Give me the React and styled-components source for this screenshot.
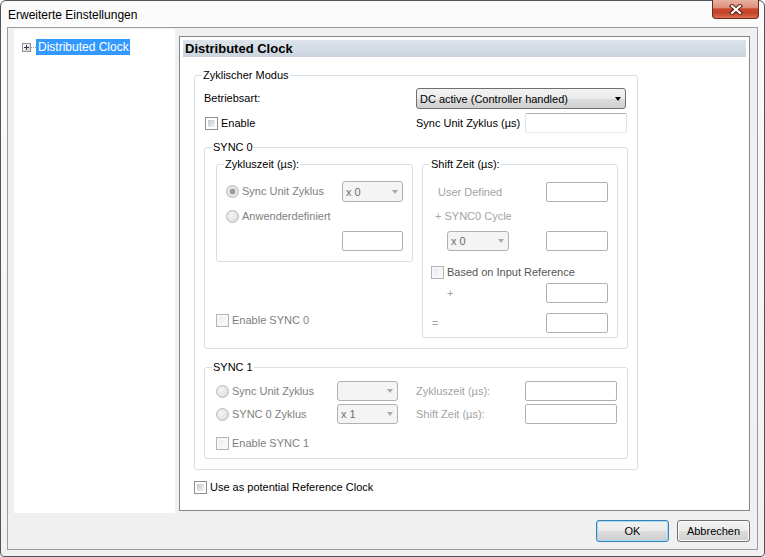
import React from "react";
import styled, { createGlobalStyle, css } from "styled-components";

const GlobalStyle = createGlobalStyle`
  html, body {
    margin: 0;
    padding: 0;
    width: 765px;
    height: 557px;
    overflow: hidden;
    background: #ffffff;
  }
  body {
    font-family: "Liberation Sans", Arial, sans-serif;
    font-size: 11px;
    color: #000;
  }
`;

const tone = {
  normal: "#000000",
  dim: "#808080",
  muted: "#a3a3a3",
  dark: "#555555",
};

const Window = styled.div`
  box-sizing: border-box;
  width: 765px;
  height: 557px;
  display: flex;
  flex-direction: column;
  padding: 0 6px 6px 6px;
  border: 1px solid #50555b;
  border-radius: 6px 6px 4px 4px;
  background: linear-gradient(#fbfbfb, #f1f1f1);
`;

const TitleBar = styled.div`
  height: 26px;
  display: flex;
  align-items: flex-start;
  flex: none;
`;

const Title = styled.span`
  margin: 7px 0 0 1px;
  font-size: 12px;
  line-height: 14px;
`;

const CloseButton = styled.div`
  box-sizing: border-box;
  width: 47px;
  height: 19px;
  margin: -1px -1px 0 auto;
  display: flex;
  align-items: center;
  justify-content: center;
  border: 1px solid #6e2b1e;
  border-top: none;
  border-radius: 0 0 4px 4px;
  background: linear-gradient(
    #eab0a2 0%,
    #de8f7c 42%,
    #c8472d 50%,
    #c3432a 72%,
    #d96f52 100%
  );
`;

const Client = styled.div`
  flex: 1;
  display: flex;
  flex-direction: column;
  border: 1px solid #9b9b9b;
  background: #f0f0f0;
  min-height: 0;
`;

const MainRow = styled.div`
  flex: 1;
  display: flex;
  gap: 4px;
  padding: 1px 7px 0 6px;
  min-height: 0;
`;

const TreePane = styled.div`
  width: 161px;
  flex: none;
  background: #ffffff;
  padding: 10px 0 0 8px;
  box-sizing: border-box;
`;

const TreeItem = styled.div`
  display: flex;
  align-items: center;
  height: 16px;
`;

const TreeLabel = styled.span`
  background: #3399ff;
  color: #ffffff;
  font-size: 12px;
  line-height: 16px;
  padding: 0 1px 0 2px;
`;

const DetailPane = styled.div`
  flex: 1;
  margin: 7px 0 2px 0;
  border: 1px solid #828790;
  background: #ffffff;
  padding: 3px;
  display: flex;
  flex-direction: column;
`;

const PanelHeader = styled.div`
  height: 17px;
  line-height: 17px;
  padding-left: 2px;
  font-size: 13px;
  font-weight: bold;
  background: linear-gradient(#dde4eb, #cbd4de);
`;

const PanelBody = styled.div`
  padding-left: 11px;
  display: flex;
  flex-direction: column;
`;

const Group = styled.fieldset`
  box-sizing: border-box;
  width: ${(p) => p.$w}px;
  margin: ${(p) => p.$mt || 0}px 0 0 0;
  padding: 0 ${(p) => p.$pr}px ${(p) => p.$pb}px ${(p) => p.$pl}px;
  border: 1px solid #d5dfe5;
  border-radius: 3px;
  min-width: 0;
  flex: none;
`;

const Legend = styled.legend`
  padding: 0 1px;
  margin-left: ${(p) => p.$x || 0}px;
  font-size: 11px;
  line-height: 13px;
  color: #000;
`;

const Row = styled.div`
  display: flex;
  align-items: center;
  height: ${(p) => p.$h || 20}px;
  margin-top: ${(p) => p.$mt || 0}px;
  padding-left: ${(p) => p.$indent || 0}px;
`;

const Columns = styled.div`
  display: flex;
  justify-content: space-between;
  align-items: flex-start;
  margin-top: ${(p) => p.$mt || 0}px;
`;

const Column = styled.div`
  display: flex;
  flex-direction: column;
`;

const Cell = styled.div`
  flex: none;
  display: flex;
  align-items: center;
  width: ${(p) => p.$w}px;
  padding-left: ${(p) => p.$pl || 0}px;
  box-sizing: border-box;
`;

const Label = styled.span`
  flex: none;
  width: ${(p) => (p.$w ? `${p.$w}px` : "auto")};
  margin-left: ${(p) => p.$ml || 0}px;
  color: ${(p) => tone[p.$tone || "normal"]};
  white-space: nowrap;
  line-height: 13px;
`;

const Spacer = styled.span`
  flex: 1;
`;

const Select = styled.div`
  box-sizing: border-box;
  flex: none;
  width: ${(p) => p.$w}px;
  height: ${(p) => p.$h || 20}px;
  display: flex;
  align-items: center;
  justify-content: space-between;
  padding: 0 4px 0 3px;
  border-radius: 3px;
  white-space: nowrap;
  ${(p) =>
    p.$disabled
      ? css`
          border: 1px solid #adb2b5;
          background: #f4f4f4;
          color: #6d6d6d;
        `
      : css`
          border: 1px solid #707070;
          background: linear-gradient(#f2f2f2 0%, #ebebeb 50%, #dddddd 50%, #cfcfcf 100%);
          color: #000;
        `}
`;

const Arrow = styled.span`
  width: 0;
  height: 0;
  border-left: 3.5px solid transparent;
  border-right: 3.5px solid transparent;
  border-top: 4px solid ${(p) => (p.$disabled ? "#a9a9a9" : "#000")};
`;

const TextBox = styled.div`
  box-sizing: border-box;
  flex: none;
  width: ${(p) => p.$w}px;
  height: ${(p) => p.$h || 20}px;
  background: #ffffff;
  border: 1px solid;
  border-color: ${(p) =>
    p.$disabled ? "#adb2b5" : "#abadb3 #dbdfe6 #e3e9ef #e2e3ea"};
  border-radius: 2px;
`;

const Check = styled.span`
  box-sizing: border-box;
  flex: none;
  width: 13px;
  height: 13px;
  padding: 2px;
  margin-right: 3px;
  border: 1px solid ${(p) => (p.$disabled ? "#b4b4b4" : "#8e8f8f")};
  background: ${(p) =>
    p.$disabled
      ? "linear-gradient(135deg, #ececec, #fafafa) content-box, #f7f7f7"
      : "linear-gradient(135deg, #c3c7cc, #f4f4f4) content-box, #ffffff"};
`;

const Radio = styled.span`
  box-sizing: border-box;
  flex: none;
  width: 13px;
  height: 13px;
  margin-right: 3px;
  border-radius: 50%;
  border: 1px solid #b7b7b7;
  background: ${(p) =>
    p.$checked
      ? "radial-gradient(circle, #9a9a9a 0 2.6px, #e9e9e9 3.2px, #d6d6d6 100%)"
      : "radial-gradient(circle at 40% 40%, #f6f6f6, #d6d6d6)"};
`;

const ButtonBar = styled.div`
  flex: none;
  display: flex;
  justify-content: flex-end;
  gap: 8px;
  padding: 7px 7px 7px 0;
`;

const Button = styled.div`
  box-sizing: border-box;
  width: 73px;
  height: 22px;
  display: flex;
  align-items: center;
  justify-content: center;
  border-radius: 3px;
  border: 1px solid ${(p) => (p.$default ? "#3c7fb1" : "#707070")};
  box-shadow: ${(p) =>
    p.$default ? "inset 0 0 0 1px #9fdcf6" : "inset 0 0 0 1px #fcfcfc"};
  background: linear-gradient(#f2f2f2 0%, #ebebeb 50%, #dddddd 50%, #cfcfcf 100%);
  font-size: 11px;
`;

const CloseGlyph = () => (
  <svg width="14" height="11" viewBox="0 0 14 11">
    <path d="M3 2 L11 9 M11 2 L3 9" stroke="#5a1c10" strokeWidth="4.2" strokeLinecap="square" fill="none" />
    <path d="M3 2 L11 9 M11 2 L3 9" stroke="#ffffff" strokeWidth="2.2" strokeLinecap="square" fill="none" />
  </svg>
);

const ExpandGlyph = () => (
  <svg width="14" height="9" viewBox="0 0 14 9">
    <defs>
      <linearGradient id="exp" x1="0" y1="0" x2="1" y2="1">
        <stop offset="0" stopColor="#ffffff" />
        <stop offset="1" stopColor="#d4d4d4" />
      </linearGradient>
    </defs>
    <rect x="0.5" y="0.5" width="8" height="8" fill="url(#exp)" stroke="#919191" />
    <path d="M2 4.5 H7 M4.5 2 V7" stroke="#253c5c" strokeWidth="1" />
    <path d="M9 4.5 H14" stroke="#a0a0a0" strokeWidth="1" strokeDasharray="1 1" />
  </svg>
);

const DropDown = ({ w, h, value, disabled }) => (
  <Select $w={w} $h={h} $disabled={disabled}>
    <span>{value}</span>
    <Arrow $disabled={disabled} />
  </Select>
);

export default function App() {
  return (
    <>
      <GlobalStyle />
      <Window>
        <TitleBar>
          <Title>Erweiterte Einstellungen</Title>
          <CloseButton>
            <CloseGlyph />
          </CloseButton>
        </TitleBar>
        <Client>
          <MainRow>
            <TreePane>
              <TreeItem>
                <ExpandGlyph />
                <TreeLabel>Distributed Clock</TreeLabel>
              </TreeItem>
            </TreePane>
            <DetailPane>
              <PanelHeader>Distributed Clock</PanelHeader>
              <PanelBody>
                <Group $w={444} $mt={12} $pl={9} $pr={9} $pb={10}>
                  <Legend $x={-2}>Zyklischer Modus</Legend>
                  <Row $mt={6} $h={21}>
                    <Label $w={212}>Betriebsart:</Label>
                    <DropDown w={210} h={21} value="DC active (Controller handled)" />
                  </Row>
                  <Row $mt={4} $h={20}>
                    <Cell $w={212} $pl={1}>
                      <Check />
                      <Label>Enable</Label>
                    </Cell>
                    <Label $w={109}>Sync Unit Zyklus (µs)</Label>
                    <TextBox $w={102} />
                  </Row>

                  <Group $w={424} $mt={8} $pl={11} $pr={9} $pb={10}>
                    <Legend $x={-4}>SYNC 0</Legend>
                    <Columns $mt={4}>
                      <Column>
                        <Group $w={197} $pl={9} $pr={9} $pb={10}>
                          <Legend $x={-2}>Zykluszeit (µs):</Legend>
                          <Row $mt={10} $h={21}>
                            <Radio $checked />
                            <Label $tone="dim">Sync Unit Zyklus</Label>
                            <Spacer />
                            <DropDown w={61} h={21} value="x 0" disabled />
                          </Row>
                          <Row $mt={4} $h={20}>
                            <Radio />
                            <Label $tone="dim">Anwenderdefiniert</Label>
                          </Row>
                          <Row $mt={5} $h={20}>
                            <Spacer />
                            <TextBox $w={61} $disabled />
                          </Row>
                        </Group>
                        <Row $mt={52} $h={13}>
                          <Check $disabled />
                          <Label $tone="dim">Enable SYNC 0</Label>
                        </Row>
                      </Column>
                      <Group $w={196} $pl={8} $pr={9} $pb={4}>
                        <Legend $x={-1}>Shift Zeit (µs):</Legend>
                        <Row $mt={11} $h={20} $indent={7}>
                          <Label $tone="muted">User Defined</Label>
                          <Spacer />
                          <TextBox $w={62} $disabled />
                        </Row>
                        <Row $mt={4} $h={20} $indent={4}>
                          <Label $tone="muted">+ SYNC0 Cycle</Label>
                        </Row>
                        <Row $mt={5} $h={20} $indent={16}>
                          <DropDown w={62} h={20} value="x 0" disabled />
                          <Spacer />
                          <TextBox $w={62} $disabled />
                        </Row>
                        <Row $mt={14} $h={14}>
                          <Check $disabled />
                          <Label $tone="dark">Based on Input Reference</Label>
                        </Row>
                        <Row $mt={4} $h={20} $indent={16}>
                          <Label $tone="muted">+</Label>
                          <Spacer />
                          <TextBox $w={62} $disabled />
                        </Row>
                        <Row $mt={10} $h={20} $indent={1}>
                          <Label $tone="muted">=</Label>
                          <Spacer />
                          <TextBox $w={62} $disabled />
                        </Row>
                      </Group>
                    </Columns>
                  </Group>

                  <Group $w={424} $mt={12} $pl={11} $pr={9} $pb={8}>
                    <Legend $x={-4}>SYNC 1</Legend>
                    <Row $mt={7} $h={20}>
                      <Radio />
                      <Label $w={105} $tone="dim">Sync Unit Zyklus</Label>
                      <DropDown w={61} h={20} value="" disabled />
                      <Label $w={109} $ml={18} $tone="muted">Zykluszeit (µs):</Label>
                      <TextBox $w={92} $disabled />
                    </Row>
                    <Row $mt={3} $h={20}>
                      <Radio />
                      <Label $w={105} $tone="dim">SYNC 0 Zyklus</Label>
                      <DropDown w={61} h={20} value="x 1" disabled />
                      <Label $w={109} $ml={18} $tone="muted">Shift Zeit (µs):</Label>
                      <TextBox $w={92} $disabled />
                    </Row>
                    <Row $mt={13} $h={13}>
                      <Check $disabled />
                      <Label $tone="dim">Enable SYNC 1</Label>
                    </Row>
                  </Group>
                </Group>

                <Row $mt={11} $h={13}>
                  <Check />
                  <Label>Use as potential Reference Clock</Label>
                </Row>
              </PanelBody>
            </DetailPane>
          </MainRow>
          <ButtonBar>
            <Button $default>OK</Button>
            <Button>Abbrechen</Button>
          </ButtonBar>
        </Client>
      </Window>
    </>
  );
}
